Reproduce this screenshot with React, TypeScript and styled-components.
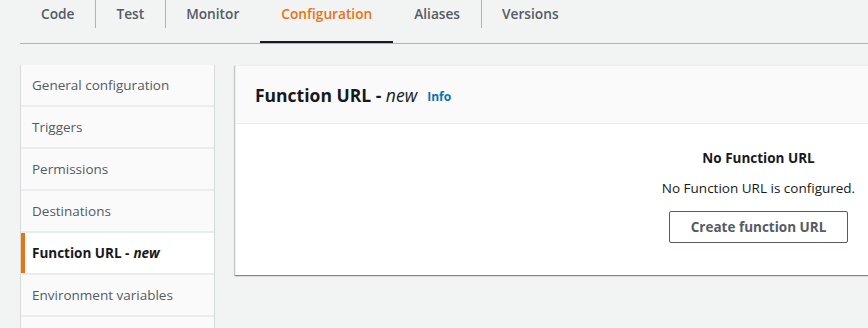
import styled, { createGlobalStyle } from "styled-components";

const GlobalStyle = createGlobalStyle`
  html, body {
    margin: 0;
    padding: 0;
    background: #f2f3f3;
    font-family: "Open Sans", "Noto Sans", Arial, sans-serif;
    color: #16191f;
    overflow: hidden;
  }
`;

const tabs = ["Code", "Test", "Monitor", "Configuration", "Aliases", "Versions"];
const navItems = [
  "General configuration",
  "Triggers",
  "Permissions",
  "Destinations",
  "Function URL",
  "Environment variables",
  "",
];

function App() {
  return (
    <>
      <GlobalStyle />
      <Page>
        <TabList>
          {tabs.map((t) => (
            <Tab key={t} $active={t === "Configuration"}>
              {t}
            </Tab>
          ))}
        </TabList>
        <Body>
          <SideNav>
            {navItems.map((n, i) => (
              <NavItem key={i} $active={n === "Function URL"}>
                {n === "Function URL" ? (
                  <>
                    Function URL - <em>new</em>
                  </>
                ) : (
                  n
                )}
              </NavItem>
            ))}
          </SideNav>
          <Panel>
            <PanelHeader>
              <Title>
                Function URL - <em>new</em>
              </Title>
              <InfoLink>Info</InfoLink>
            </PanelHeader>
            <PanelBody>
              <EmptyTitle>No Function URL</EmptyTitle>
              <EmptyText>No Function URL is configured.</EmptyText>
              <Button>Create function URL</Button>
            </PanelBody>
          </Panel>
        </Body>
      </Page>
    </>
  );
}

export default App;

const Page = styled.div`
  width: 868px;
  height: 328px;
  overflow: hidden;
`;

const TabList = styled.div`
  display: flex;
  margin-left: 20px;
  height: 43px;
  border-bottom: 1px solid #aab7b8;
`;

const Tab = styled.div<{ $active?: boolean }>`
  position: relative;
  padding: 0 21px;
  height: 41px;
  line-height: 27px;
  font-size: 13.7px;
  font-weight: 600;
  color: ${(p) => (p.$active ? "#ec7211" : "#545b64")};
  border-bottom: 2px solid ${(p) => (p.$active ? "#16191f" : "transparent")};
  white-space: nowrap;

  & + &::before {
    content: "";
    position: absolute;
    left: 0;
    top: 0;
    height: 28px;
    width: 1px;
    background: #aab7b8;
  }
`;

const Body = styled.div`
  display: grid;
  grid-template-columns: 195px 1046px;
  gap: 20px;
  padding: 21px 0 0 20px;
  align-items: start;
`;

const SideNav = styled.div`
  display: flex;
  flex-direction: column;
  gap: 2px;
  background: #eaeded;
  border-left: 1px solid #d5dbdb;
  border-right: 1px solid #d5dbdb;
`;

const NavItem = styled.div<{ $active?: boolean }>`
  height: 40px;
  display: flex;
  align-items: center;
  padding-left: ${(p) => (p.$active ? "7px" : "11px")};
  background: ${(p) => (p.$active ? "#ffffff" : "#fafafa")};
  border-left: ${(p) => (p.$active ? "4px solid #ec7211" : "none")};
  font-size: 13.5px;
  font-weight: ${(p) => (p.$active ? 700 : 400)};
  color: ${(p) => (p.$active ? "#16191f" : "#545b64")};
  white-space: nowrap;

  em {
    margin-left: 4px;
  }
`;

const Panel = styled.div`
  background: #ffffff;
  border-top: 1px solid #eaeded;
  border-left: 1px solid #eaeded;
  box-shadow: 0 1px 1px 0 rgba(0, 28, 36, 0.3), 1px 1px 1px 0 rgba(0, 28, 36, 0.15),
    -1px 1px 1px 0 rgba(0, 28, 36, 0.15);
`;

const PanelHeader = styled.div`
  display: flex;
  align-items: center;
  gap: 10px;
  height: 57px;
  padding: 0 19px;
  background: #fafafa;
  border-bottom: 1px solid #eaeded;
`;

const Title = styled.h2`
  margin: 0;
  font-size: 17.5px;
  font-weight: 700;
  color: #16191f;

  em {
    font-weight: 400;
  }
`;

const InfoLink = styled.a`
  font-size: 12px;
  font-weight: 700;
  color: #0073bb;
  margin-top: 3px;
`;

const PanelBody = styled.div`
  height: 151px;
  display: flex;
  flex-direction: column;
  align-items: center;
  padding-top: 25px;
  box-sizing: border-box;
`;

const EmptyTitle = styled.div`
  font-size: 13.5px;
  font-weight: 700;
  color: #16191f;
`;

const EmptyText = styled.div`
  margin-top: 12px;
  font-size: 13.5px;
  color: #16191f;
`;

const Button = styled.button`
  margin-top: 14px;
  width: 179px;
  height: 32px;
  background: #ffffff;
  border: 1px solid #545b64;
  border-radius: 2px;
  font-family: inherit;
  font-size: 13.5px;
  font-weight: 700;
  color: #545b64;
`;
